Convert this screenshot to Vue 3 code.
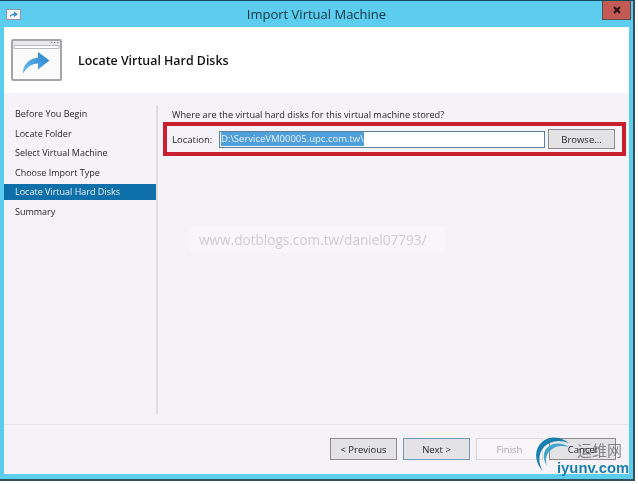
<script setup>
const steps = [
  { name: 'Before You Begin' },
  { name: 'Locate Folder' },
  { name: 'Select Virtual Machine' },
  { name: 'Choose Import Type' },
  { name: 'Locate Virtual Hard Disks', active: true },
  { name: 'Summary' }
]
</script>

<template>
  <div class="page">
    <div class="window">
      <div class="titlebar">
        <svg class="tinyicon" width="15" height="11" viewBox="0 0 15 11">
          <rect x="0.5" y="0.5" width="14" height="10" fill="#f4f6f8" stroke="#8b98a3" />
          <path d="M3.5 8.5C4 5.5 6 4.5 8 4.5V2.5L12 5.2 8 8V6.2C6.2 6.2 4.8 6.8 3.5 8.5Z" fill="#3a8fd0" />
        </svg>
        <span class="title">Import Virtual Machine</span>
        <div class="close">
          <svg width="8" height="8" viewBox="0 0 8 8">
            <path d="M1 1L7 7M7 1L1 7" stroke="#2a1714" stroke-width="2.2" />
          </svg>
        </div>
      </div>

      <div class="client">
        <header class="header">
          <svg class="wizardicon" width="51" height="42" viewBox="0 0 51 42">
            <defs>
              <linearGradient id="arrowfill" x1="0" y1="1" x2="1" y2="0">
                <stop offset="0" stop-color="#6bbcf0" />
                <stop offset="1" stop-color="#2580c8" />
              </linearGradient>
            </defs>
            <rect x="1" y="1" width="49" height="40" rx="1" fill="#fbfbfc" stroke="#a3a5aa" stroke-width="2" />
            <rect x="2" y="2" width="47" height="4" fill="#e9e9ec" />
            <rect x="3" y="6.5" width="45" height="3" fill="#fff" stroke="#a9abb0" stroke-width="0.8" />
            <path d="M40 3.5h1.5M43 3.5h1.5M46 3.5h1.5" stroke="#8d9095" stroke-width="1" />
            <path d="M12 34.5C11.5 26 18 19.5 27 18.5V13L38.5 21.5 27 30.5V24.5C21 24.5 16 28 12 34.5Z" fill="url(#arrowfill)" />
          </svg>
          <h1 class="heading">Locate Virtual Hard Disks</h1>
        </header>

        <div class="body">
          <nav class="steps">
            <div v-for="s in steps" :key="s.name" class="step" :class="{ active: s.active }">{{ s.name }}</div>
          </nav>
          <main class="main">
            <p class="question">Where are the virtual hard disks for this virtual machine stored?</p>
            <div class="locbox">
              <span class="loclabel">Location:</span>
              <div class="locinput"><span class="selected">D:\ServiceVM00005.upc.com.tw\</span></div>
              <div class="btn browse">Browse...</div>
            </div>
          </main>
        </div>

        <footer class="footer">
          <div class="btn">&lt; Previous</div>
          <div class="btn default">Next &gt;</div>
          <div class="btn disabled">Finish</div>
          <div class="btn">Cancel</div>
        </footer>
      </div>
    </div>

    <div class="watermark">www.dotblogs.com.tw/daniel07793/</div>

    <div class="logo">
      <svg class="swoosh" width="42" height="40" viewBox="0 0 42 40">
        <path d="M8 35C-1 26 -1 13 7 6 14 0 24 0 34 7 24 3 15 5 9 11 3 18 3 27 8 35Z" fill="#1b7fae" />
        <path d="M12 30C7 22 8 14 14 10 20 6 28 7 34 11 26 9 20 10 16 14 11 18 10 24 12 30Z" fill="#3fa6cf" />
      </svg>
      <span class="cjk">运维网</span>
      <span class="brand">iyunv.com</span>
    </div>
  </div>
</template>

<style>
html, body { margin: 0; padding: 0; background: #fff; }
</style>

<style scoped>
.page {
  position: relative;
  width: 638px;
  height: 484px;
  overflow: hidden;
  background: #fff;
  font-family: "Open Sans", "Noto Sans", sans-serif;
  font-size: 9.5px;
  color: #26262a;
  filter: blur(0.3px);
}
.window {
  box-sizing: border-box;
  width: 635px;
  height: 481px;
  background: #5ccdef;
  border-top: 1px solid #0f4a63;
  border-right: 2px solid #33505e;
  border-bottom: 2px solid #33505e;
  display: flex;
  flex-direction: column;
}
.titlebar {
  height: 26px;
  display: flex;
  align-items: center;
  justify-content: center;
  position: relative;
  flex: none;
}
.tinyicon { position: absolute; left: 6px; top: 8px; }
.title { font-size: 13px; color: #123342; }
.close {
  position: absolute;
  right: 2px;
  top: 0;
  width: 29px;
  height: 19px;
  background: #c45a54;
  border: 1px solid #5f4a4c;
  border-top: 0;
  box-sizing: border-box;
  display: flex;
  align-items: center;
  justify-content: center;
}
.client {
  flex: 1;
  margin: 0 4px 5px 4px;
  background: #f6f3f8;
  display: flex;
  flex-direction: column;
  min-height: 0;
}
.header {
  height: 66px;
  background: #fff;
  display: flex;
  align-items: center;
  flex: none;
  box-sizing: border-box;
  padding-left: 7px;
}
.wizardicon { flex: none; }
.heading {
  margin: 0 0 0 16px;
  font-size: 12.4px;
  font-weight: 600;
  color: #111;
}
.body {
  flex: 1;
  display: flex;
  min-height: 0;
  padding-top: 12px;
  border-bottom: 1px solid #e4e4e8;
}
.steps {
  width: 152px;
  margin-bottom: 10px;
  border-right: 2px solid #dfdfe3;
  flex: none;
  padding-top: 1px;
}
.step {
  height: 16px;
  line-height: 16px;
  margin-bottom: 3.6px;
  padding-left: 11px;
  font-size: 9px;
}
.step.active { background: #0f6fa8; color: #e8f2f8; }
.main {
  flex: 1;
  padding-left: 14px;
  min-width: 0;
}
.question {
  margin: 2px 0 0;
  line-height: 16px;
  font-size: 9.2px;
}
.locbox {
  margin: -1px 0 0 -9px;
  width: 463px;
  height: 34px;
  box-sizing: border-box;
  border: 4px solid #c8202f;
  display: flex;
  align-items: center;
  padding-left: 5px;
}
.loclabel { width: 47px; flex: none; }
.locinput {
  width: 326px;
  height: 17px;
  box-sizing: border-box;
  background: #fff;
  border: 1px solid #5d7f9b;
  display: flex;
  align-items: center;
  flex: none;
}
.selected {
  background: #4f9fdc;
  color: #e9f4fb;
  line-height: 14px;
  margin-left: 1px;
}
.btn {
  width: 67px;
  height: 22px;
  box-sizing: border-box;
  background: #e3e3e5;
  border: 1px solid #8c8c8e;
  display: flex;
  align-items: center;
  justify-content: center;
  flex: none;
}
.browse { margin-left: 3px; height: 20px; }
.footer {
  height: 49px;
  flex: none;
  display: flex;
  align-items: flex-start;
  padding: 13px 0 0 326px;
  gap: 6px;
  box-sizing: border-box;
}
.btn.default { border-color: #6f9ab5; }
.btn.disabled { background: #f7f5f8; border-color: #d9d9db; color: #a9a9ab; }
.watermark {
  position: absolute;
  left: 190px;
  top: 226px;
  width: 255px;
  height: 27px;
  line-height: 27px;
  padding-left: 9px;
  box-sizing: border-box;
  background: #f8f6f9;
  font-size: 13.6px;
  color: #cfcdd2;
}
.logo {
  position: absolute;
  left: 535px;
  top: 436px;
  width: 103px;
  height: 48px;
}
.swoosh { position: absolute; left: 0; top: 0; }
.cjk {
  position: absolute;
  left: 42px;
  top: 5px;
  font-family: "Noto Sans CJK SC", sans-serif;
  font-size: 15px;
  line-height: 18px;
  color: rgba(80, 80, 85, 0.65);
}
.brand {
  position: absolute;
  left: 22px;
  top: 23px;
  font-family: "Liberation Sans", Arial, sans-serif;
  font-weight: 700;
  font-size: 14.8px;
  line-height: 18px;
  color: #1b7fae;
}
</style>
